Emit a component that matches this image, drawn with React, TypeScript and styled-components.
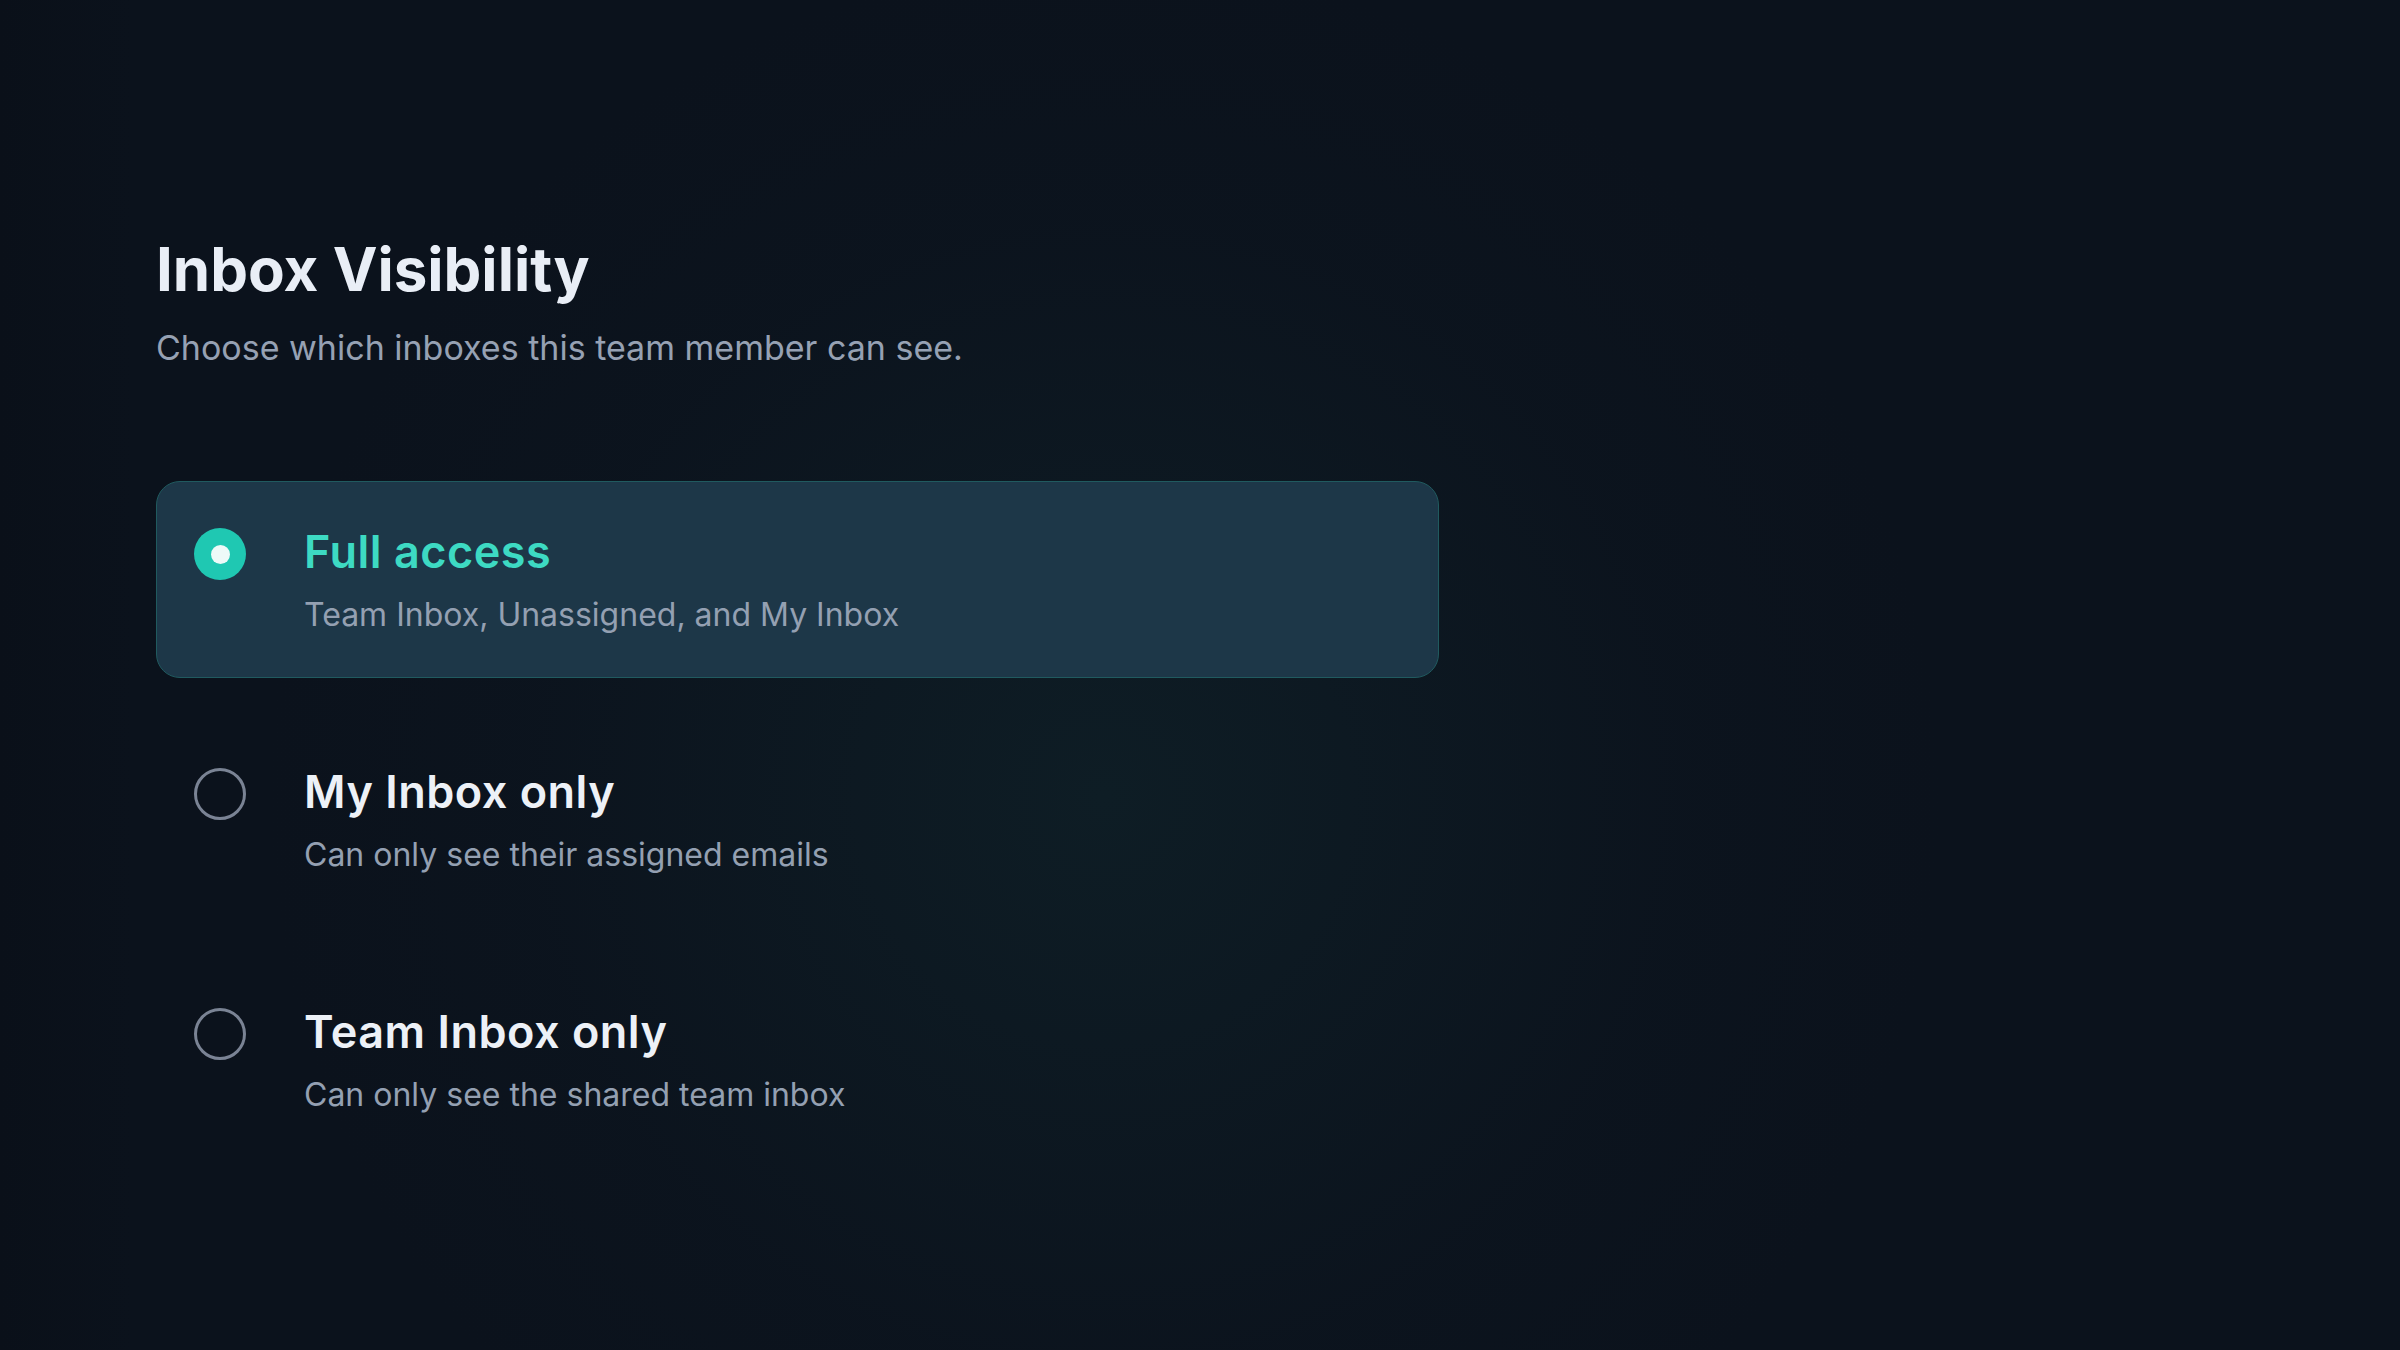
import React, { useState } from "react";
import styled, { createGlobalStyle } from "styled-components";

const GlobalStyle = createGlobalStyle`
  html, body {
    margin: 0;
    padding: 0;
    background: #0b121c;
  }
  * { box-sizing: border-box; }
`;

const Page = styled.div`
  width: 2400px;
  height: 1350px;
  overflow: hidden;
  font-family: Inter, "Noto Sans", sans-serif;
  background:
    radial-gradient(circle at 46% 59%, rgba(17, 40, 46, 0.5) 0%, rgba(15, 32, 40, 0.4) 22%, rgba(13, 24, 34, 0.25) 38%, rgba(11, 18, 28, 0) 55%),
    linear-gradient(90deg, #0a1019 0%, #0b121c 5.5%, #0b121c 100%);
  padding: 233px 0 0 156px;
`;

const Panel = styled.section`
  width: 1283px;
  display: flex;
  flex-direction: column;
`;

const Title = styled.h1`
  margin: 0;
  font-size: 60px;
  line-height: 72px;
  font-weight: 700;
  letter-spacing: 0;
  color: #e9eef6;
`;

const Subtitle = styled.p`
  margin: 19px 0 0;
  font-size: 34px;
  line-height: 48px;
  font-weight: 400;
  color: #96a1b3;
`;

const OptionList = styled.div`
  margin-top: 109px;
  display: flex;
  flex-direction: column;
  gap: 43px;
`;

const Option = styled.label<{ $selected: boolean }>`
  display: flex;
  align-items: flex-start;
  gap: 58px;
  height: 197px;
  padding: 42px 37px 0;
  border-radius: 24px;
  border: 1.5px solid ${(p) => (p.$selected ? "#205a5f" : "transparent")};
  background: ${(p) => (p.$selected ? "#1d3748" : "transparent")};
  cursor: pointer;
`;

const Radio = styled.span<{ $selected: boolean }>`
  flex: none;
  width: 52px;
  height: 52px;
  margin-top: 4px;
  border-radius: 50%;
  display: flex;
  align-items: center;
  justify-content: center;
  background: ${(p) => (p.$selected ? "#1fc8b2" : "transparent")};
  border: ${(p) => (p.$selected ? "none" : "3.5px solid #7a8394")};
`;

const Dot = styled.span`
  width: 19px;
  height: 19px;
  border-radius: 50%;
  background: #eefaf8;
`;

const TextCol = styled.div`
  display: flex;
  flex-direction: column;
  gap: 14px;
`;

const OptionTitle = styled.div<{ $selected: boolean }>`
  font-size: 45px;
  line-height: 55px;
  font-weight: 600;
  letter-spacing: 0.5px;
  color: ${(p) => (p.$selected ? "#3ddac3" : "#edf1f7")};
`;

const OptionDesc = styled.div`
  font-size: 32px;
  line-height: 43px;
  font-weight: 400;
  color: #94a0b2;
`;

const options = [
  { id: "full", title: "Full access", desc: "Team Inbox, Unassigned, and My Inbox" },
  { id: "mine", title: "My Inbox only", desc: "Can only see their assigned emails" },
  { id: "team", title: "Team Inbox only", desc: "Can only see the shared team inbox" },
];

export default function App() {
  const [selected, setSelected] = useState("full");
  return (
    <>
      <GlobalStyle />
      <Page>
        <Panel>
          <Title>Inbox Visibility</Title>
          <Subtitle>Choose which inboxes this team member can see.</Subtitle>
          <OptionList>
            {options.map((o) => {
              const sel = o.id === selected;
              return (
                <Option key={o.id} $selected={sel} onClick={() => setSelected(o.id)}>
                  <Radio $selected={sel}>{sel && <Dot />}</Radio>
                  <TextCol>
                    <OptionTitle $selected={sel}>{o.title}</OptionTitle>
                    <OptionDesc>{o.desc}</OptionDesc>
                  </TextCol>
                </Option>
              );
            })}
          </OptionList>
        </Panel>
      </Page>
    </>
  );
}
